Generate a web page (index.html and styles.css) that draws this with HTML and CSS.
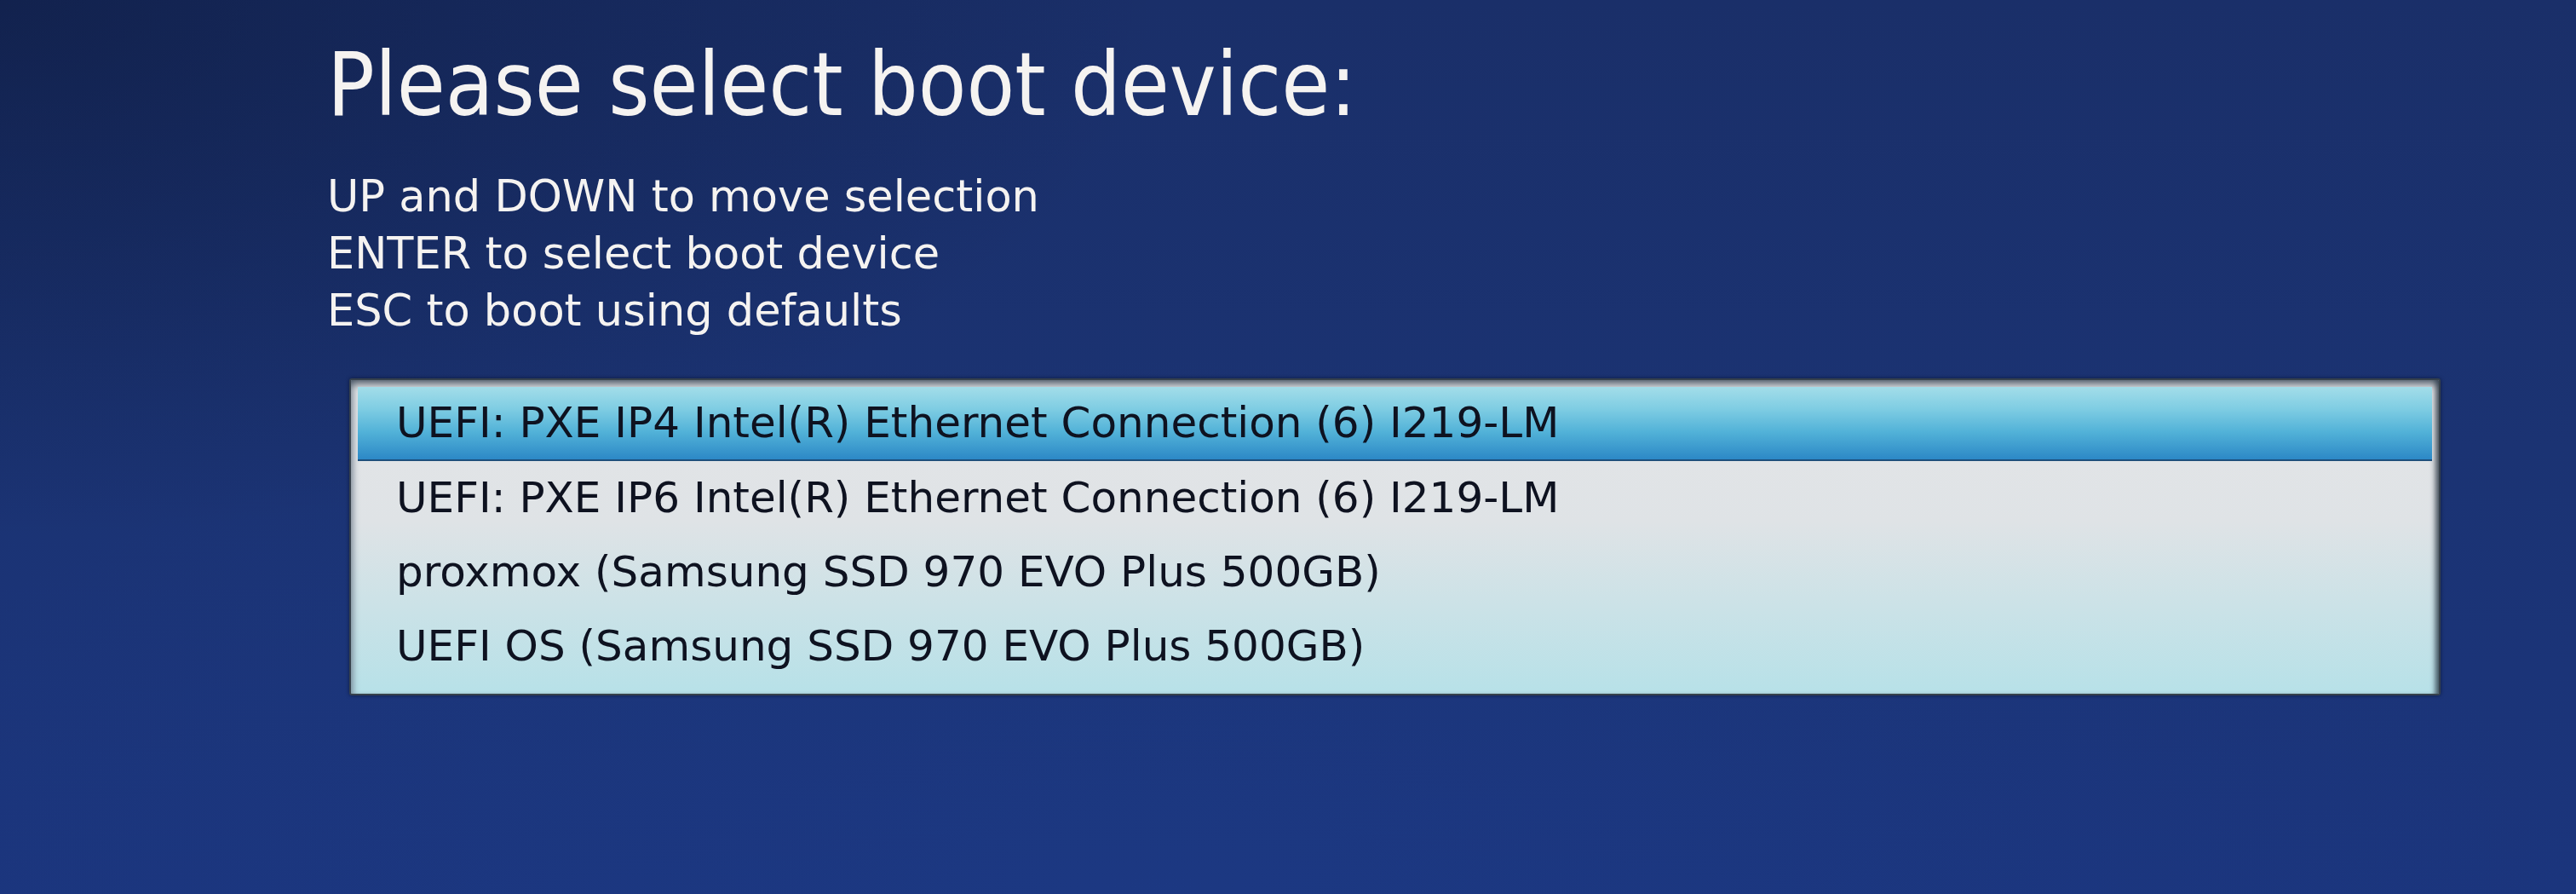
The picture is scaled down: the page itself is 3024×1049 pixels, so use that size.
FILE: index.html
```html
<!DOCTYPE html>
<html lang="en">
<head>
    <meta charset="UTF-8">
    <meta name="viewport" content="width=device-width, initial-scale=1.0">
    <title>Boot menu</title>
    <link rel="stylesheet" href="styles.css">
</head>
<body>
    <div class="screen">
        <h1 class="title">Please select boot device:</h1>

        <div class="help">
            <div>UP and DOWN to move selection</div>
            <div>ENTER to select boot device</div>
            <div>ESC to boot using defaults</div>
        </div>

        <div class="menu">
            <div class="item selected">UEFI: PXE IP4 Intel(R) Ethernet Connection (6) I219-LM</div>
            <div class="item">UEFI: PXE IP6 Intel(R) Ethernet Connection (6) I219-LM</div>
            <div class="item">proxmox (Samsung SSD 970 EVO Plus 500GB)</div>
            <div class="item">UEFI OS (Samsung SSD 970 EVO Plus 500GB)</div>
        </div>
    </div>
</body>
</html>
```

FILE: styles.css
```css
html, body {
    height: 100%;
}
body {
    margin: 0;
    font-family: "DejaVu Sans", Verdana, sans-serif;
    background:
        radial-gradient(ellipse 45% 60% at 0% 0%, rgba(8, 18, 45, 0.45), rgba(8, 18, 45, 0) 100%),
        radial-gradient(ellipse 55% 60% at 45% 100%, rgba(30, 62, 140, 0.35), rgba(30, 62, 140, 0) 100%),
        linear-gradient(180deg, #1a2f69 0%, #1b3373 50%, #1b357d 100%);
    overflow: hidden;
}
.screen {
    padding: 48px 0 0 384px;
}
.title {
    margin: 0;
    font-family: "DejaVu Sans Condensed", "DejaVu Sans", sans-serif;
    font-stretch: condensed;
    font-weight: normal;
    font-size: 103px;
    line-height: 103px;
    color: #f5f3f1;
    white-space: nowrap;
}
.help {
    margin-top: 46px;
    font-size: 51px;
    line-height: 67px;
    color: #f5f3f1;
    white-space: nowrap;
}
.menu {
    width: 2435px;
    margin: 46px 0 0 26px;
    padding: 8px 8px 12px 8px;
    border: 2px solid #36414c;
    border-radius: 3px;
    background: linear-gradient(180deg, #e4e5e7 0%, #dfe3e6 45%, #b7e1e8 100%);
    box-shadow:
        inset 0 9px 8px -4px rgba(45, 60, 78, 0.75),
        inset 8px 0 6px -4px rgba(120, 135, 150, 0.6),
        inset -8px 0 6px -4px rgba(40, 52, 66, 0.8),
        0 0 4px rgba(5, 12, 30, 0.6);
}
.item {
    height: 87px;
    padding-left: 45px;
    font-size: 50px;
    line-height: 87px;
    color: #0e1220;
    white-space: nowrap;
}
.selected {
    height: 85px;
    line-height: 85px;
    background: linear-gradient(180deg, #a3dde9 0%, #7fcde3 30%, #52b2d8 62%, #2c88c6 100%);
    border-bottom: 2px solid #1d4f7c;
}
```
